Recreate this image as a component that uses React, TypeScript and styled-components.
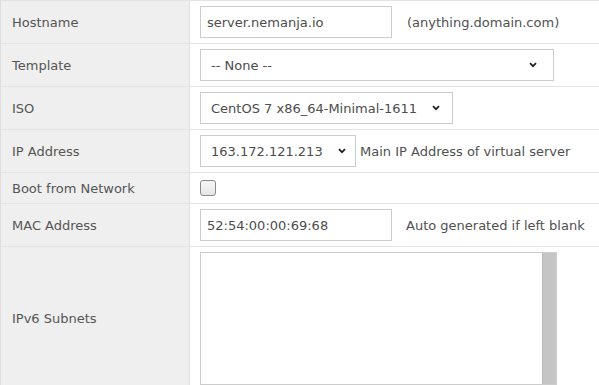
import React, { FC } from 'react'
import styled, { createGlobalStyle } from 'styled-components'

const GlobalStyle = createGlobalStyle`
  html, body {
    margin: 0;
    padding: 0;
    background: #ffffff;
    font-family: "DejaVu Sans", Verdana, sans-serif;
    font-size: 13px;
    color: #505050;
  }
`

const Table = styled.div`
  width: 599px;
  border-left: 1px solid #dddddd;
  box-sizing: border-box;
`

const Row = styled.div`
  display: flex;
  border-top: 1px solid #e3e3e3;
`

const Label = styled.div`
  width: 189px;
  flex-shrink: 0;
  background: #efefef;
  border-right: 1px solid #e0e0e0;
  display: flex;
  align-items: center;
  padding-left: 11px;
  box-sizing: border-box;
  color: #555;
`

const Field = styled.div<{ $pad?: number }>`
  flex: 1;
  display: flex;
  align-items: center;
  padding: ${p => (p.$pad ?? 5)}px 10px;
`

const Input = styled.input`
  width: 192px;
  height: 32px;
  box-sizing: border-box;
  border: 1px solid #cccccc;
  padding: 0 6px;
  font-family: inherit;
  font-size: 13px;
  color: #4d4d4d;
  outline: none;
`

const Hint = styled.span<{ $gap: number }>`
  margin-left: ${p => p.$gap}px;
  color: #505050;
  white-space: nowrap;
`

const Select = styled.div<{ $width: number; $right: number }>`
  height: 32px;
  width: ${p => p.$width}px;
  box-sizing: border-box;
  border: 1px solid #cccccc;
  display: flex;
  align-items: center;
  justify-content: space-between;
  padding: 0 ${p => p.$right}px 0 10px;
  color: #4d4d4d;
  background: #fff;
`

const SelectText = styled.span`
  white-space: nowrap;
`

const Checkbox = styled.span`
  display: block;
  width: 16px;
  height: 16px;
  box-sizing: border-box;
  border: 1px solid #8a8a8a;
  border-radius: 3px;
  background: linear-gradient(#f7f7f7, #e6e6e6);
`

const AreaBox = styled.div`
  width: 357px;
  height: 133px;
  box-sizing: border-box;
  border: 1px solid #cccccc;
  display: flex;
`

const Area = styled.textarea`
  flex: 1;
  border: none;
  resize: none;
  outline: none;
  padding: 4px 6px;
  font-family: inherit;
  font-size: 13px;
`

const ScrollTrack = styled.div`
  width: 13px;
  background: #c4c5c4;
  border-left: 1px solid #b9bab9;
`

const Chevron: FC = () => (
  <svg width="8" height="6" viewBox="0 0 8 6">
    <path d="M1 1.2 L4 4.2 L7 1.2" fill="none" stroke="#222" strokeWidth="1.8" />
  </svg>
)

export default function App() {
  return (
    <>
      <GlobalStyle />
      <Table>
        <Row>
          <Label>Hostname</Label>
          <Field>
            <Input defaultValue="server.nemanja.io" />
            <Hint $gap={15}>(anything.domain.com)</Hint>
          </Field>
        </Row>
        <Row>
          <Label>Template</Label>
          <Field>
            <Select $width={354} $right={16}>
              <SelectText>-- None --</SelectText>
              <Chevron />
            </Select>
          </Field>
        </Row>
        <Row>
          <Label>ISO</Label>
          <Field>
            <Select $width={253} $right={12}>
              <SelectText>CentOS 7 x86_64-Minimal-1611</SelectText>
              <Chevron />
            </Select>
          </Field>
        </Row>
        <Row>
          <Label>IP Address</Label>
          <Field>
            <Select $width={156} $right={9}>
              <SelectText>163.172.121.213</SelectText>
              <Chevron />
            </Select>
            <Hint $gap={4}>Main IP Address of virtual server</Hint>
          </Field>
        </Row>
        <Row>
          <Label>Boot from Network</Label>
          <Field $pad={7}>
            <Checkbox />
          </Field>
        </Row>
        <Row>
          <Label>MAC Address</Label>
          <Field>
            <Input defaultValue="52:54:00:00:69:68" />
            <Hint $gap={14}>Auto generated if left blank</Hint>
          </Field>
        </Row>
        <Row>
          <Label>IPv6 Subnets</Label>
          <Field>
            <AreaBox>
              <Area />
              <ScrollTrack />
            </AreaBox>
          </Field>
        </Row>
      </Table>
    </>
  )
}
